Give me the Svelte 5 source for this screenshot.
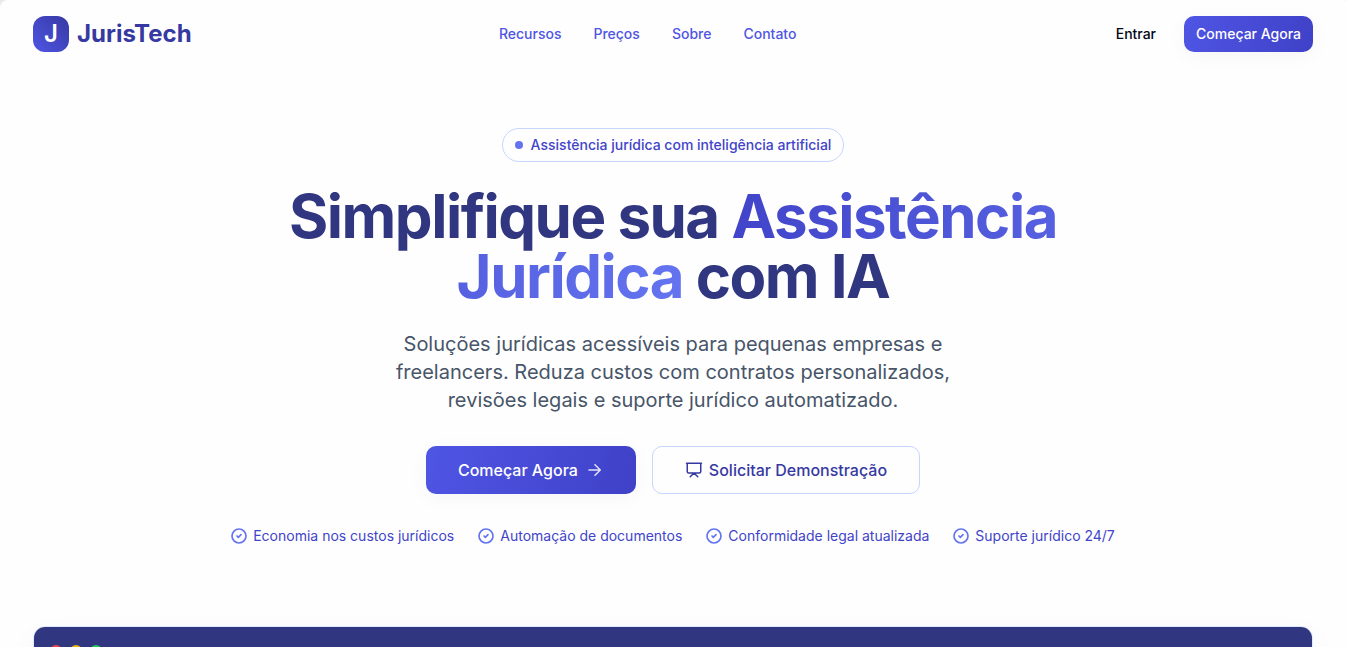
<script>
  const links = ['Recursos', 'Preços', 'Sobre', 'Contato'];
  const features = [
    'Economia nos custos jurídicos',
    'Automação de documentos',
    'Conformidade legal atualizada',
    'Suporte jurídico 24/7'
  ];
</script>

<div class="page">
  <header>
    <div class="container bar">
      <a class="brand" href="#inicio">
        <span class="mark">J</span>
        <span class="name">JurisTech</span>
      </a>
      <nav>
        {#each links as link}
          <a href="#{link.toLowerCase()}">{link}</a>
        {/each}
      </nav>
      <div class="actions">
        <button class="ghost">Entrar</button>
        <button class="primary small">Começar Agora</button>
      </div>
    </div>
  </header>

  <main>
    <section class="hero">
      <div class="badge"><span class="dot"></span>Assistência jurídica com inteligência artificial</div>
      <h1>Simplifique sua <span class="accent">Assistência Jurídica</span> com IA</h1>
      <p>
        Soluções jurídicas acessíveis para pequenas empresas e freelancers. Reduza custos com
        contratos personalizados, revisões legais e suporte jurídico automatizado.
      </p>
      <div class="cta">
        <button class="primary large">
          Começar Agora
          <svg class="arrow" width="18" height="18" viewBox="0 0 24 24" aria-hidden="true">
            <path d="M4 12h15M12 5l7 7-7 7" />
          </svg>
        </button>
        <button class="outline large">
          <svg width="18" height="18" viewBox="0 0 24 24" aria-hidden="true">
            <path d="M2 3h20M21 3v11a2 2 0 0 1-2 2H5a2 2 0 0 1-2-2V3M7 21l5-5 5 5" />
          </svg>
          Solicitar Demonstração
        </button>
      </div>
      <ul>
        {#each features as feature}
          <li>
            <svg width="16" height="16" viewBox="0 0 24 24" aria-hidden="true">
              <circle cx="12" cy="12" r="10.5" />
              <path d="M9 12l2 2 4-4" />
            </svg>
            {feature}
          </li>
        {/each}
      </ul>
    </section>

    <div class="container">
      <div class="preview">
        <div class="titlebar">
          <span class="red"></span><span class="yellow"></span><span class="green"></span>
        </div>
      </div>
    </div>
  </main>
</div>

<style>
  :global(body) {
    margin: 0;
    background: #e9e9e9;
    overflow: hidden;
  }
  .page {
    min-height: 100vh;
    box-sizing: border-box;
    background: #fefefe;
    border-radius: 8px 2px 0 0;
    font-family: Inter, sans-serif;
    color: #020617;
  }
  .container {
    max-width: 1280px;
    margin: 0 auto;
  }
  .bar {
    display: flex;
    align-items: center;
    justify-content: space-between;
    padding: 16px 0;
  }
  a {
    text-decoration: none;
  }
  .brand {
    display: flex;
    align-items: center;
    gap: 8px;
    color: #3639a2;
    font-size: 24px;
    line-height: 32px;
    font-weight: 700;
  }
  .mark {
    display: grid;
    place-items: center;
    width: 36px;
    height: 36px;
    border-radius: 12px;
    background: linear-gradient(to top right, #4f55e4, #3639a2);
    color: #fff;
    font-weight: 600;
  }
  nav {
    display: flex;
    gap: 32px;
  }
  nav a {
    color: #4f55e4;
    font-size: 14px;
    line-height: 20px;
    font-weight: 500;
  }
  .actions {
    display: flex;
    gap: 16px;
  }
  button {
    display: inline-flex;
    align-items: center;
    justify-content: center;
    box-sizing: border-box;
    border: 0;
    border-radius: 10px;
    font: 500 14px/20px Inter, sans-serif;
    cursor: pointer;
  }
  .ghost {
    padding: 8px 12px;
    background: transparent;
    color: #020617;
  }
  .primary {
    background: linear-gradient(105deg, #4f55e4, #3f41c7);
    color: #fff;
    box-shadow: 0 4px 20px rgb(0 0 0 / 4%);
  }
  .small {
    padding: 8px 12px;
  }
  .hero {
    display: flex;
    flex-direction: column;
    align-items: center;
    max-width: 896px;
    margin: 0 auto;
    padding: 60px 0 80px;
    text-align: center;
  }
  .badge {
    display: flex;
    align-items: center;
    gap: 8px;
    padding: 6px 12px;
    border: 1px solid #c7d6fe;
    border-radius: 17px;
    color: #4144c9;
    font-size: 14px;
    line-height: 20px;
    font-weight: 500;
  }
  .dot {
    width: 8px;
    height: 8px;
    border-radius: 50%;
    background: #6474f0;
  }
  h1 {
    margin: 24px 0;
    color: #313681;
    font-size: 60px;
    line-height: 60px;
    font-weight: 700;
    letter-spacing: -0.025em;
  }
  .accent {
    background: linear-gradient(to right, #4144c9, #6474f0);
    background-clip: text;
    color: transparent;
  }
  p {
    max-width: 576px;
    margin: 0 0 32px;
    color: #475569;
    font-size: 20px;
    line-height: 28px;
  }
  .cta {
    display: flex;
    gap: 16px;
  }
  .large {
    height: 48px;
    padding: 0 32px;
    font-size: 16px;
    line-height: 24px;
  }
  .outline {
    gap: 6px;
    border: 1px solid #c7d6fe;
    background: transparent;
    color: #3639a2;
  }
  .arrow {
    margin-left: 8px;
    opacity: 0.85;
  }
  svg {
    fill: none;
    stroke: currentColor;
    stroke-width: 2;
    stroke-linecap: round;
    stroke-linejoin: round;
  }
  ul {
    display: flex;
    flex-wrap: wrap;
    justify-content: center;
    gap: 12px 24px;
    margin: 32px 0 0;
    padding: 0;
    list-style: none;
  }
  li {
    display: flex;
    align-items: center;
    gap: 6px;
    color: #4144c9;
    font-size: 14px;
    line-height: 20px;
  }
  li svg {
    color: #6474f0;
    stroke-width: 2.5;
  }
  .preview {
    overflow: hidden;
    border: 1px solid #e0eaff;
    border-radius: 12px;
    background: #fff;
    box-shadow: 0 10px 30px rgb(0 0 0 / 4%);
  }
  .titlebar {
    display: flex;
    gap: 8px;
    padding: 18px 16px;
    background: #313681;
  }
  .titlebar span {
    width: 12px;
    height: 12px;
    border-radius: 50%;
  }
  .red {
    background: #ef4444;
  }
  .yellow {
    background: #eab308;
  }
  .green {
    background: #22c55e;
  }
</style>
